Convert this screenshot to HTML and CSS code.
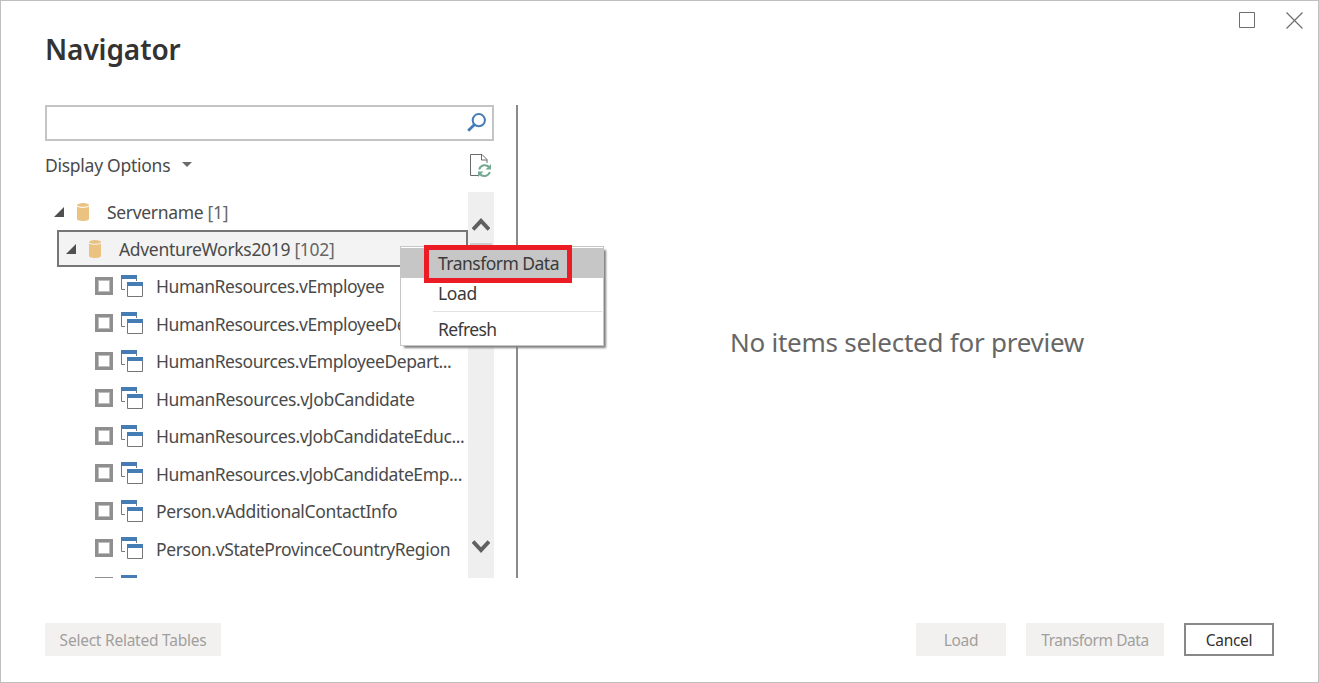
FILE: index.html
```html
<!DOCTYPE html>
<html lang="en">
<head>
<meta charset="utf-8">
<title>Navigator</title>
<link rel="stylesheet" href="styles.css">
</head>
<body>
<svg class="defs" width="0" height="0">
  <symbol id="views" viewBox="0 0 22 22">
    <path d="M.5 4v10.5H4M15.5 4v2" fill="none" stroke="#767676"/>
    <path d="M0 0h16v4H0z" fill="#457cb4"/>
    <path d="M6.500 10v11.500h15V10" fill="#fff" stroke="#767676"/>
    <path d="M6 7h16v4H6z" fill="#457cb4"/>
  </symbol>
  <symbol id="database" viewBox="0 0 12 18">
    <path d="M0 3.500C2 5.200 10 5.200 12 3.500V16c0 2.600-12 2.600-12 0z" fill="#eac282"/>
    <ellipse cx="6" cy="1.900" rx="6" ry="1.800" fill="#eac282"/>
  </symbol>
  <symbol id="expanded" viewBox="0 0 10 10"><path d="M10 0v10H0z" fill="#505050"/></symbol>
</svg>
<div class="dialog">
  <div class="window-controls">
    <svg width="16" height="16" viewBox="0 0 16 16"><path d="M.5.5h15v15H.5z" fill="none" stroke="#6e6e6e"/></svg>
    <svg width="17" height="17" viewBox="0 0 17 17"><path d="M.5.500l16 16M16.500.500l-16 16" fill="none" stroke="#6e6e6e" stroke-width="1.200"/></svg>
  </div>
  <h1 class="title"><span>Navigator</span></h1>
  <main class="content">
    <section class="sidebar">
      <div class="search">
        <svg width="20" height="20" viewBox="0 0 20 20"><circle cx="11.800" cy="7.200" r="6.100" fill="none" stroke="#457cb4" stroke-width="2"/><path d="M7.500 11.500L1.200 17.800" stroke="#457cb4" stroke-width="2.800"/></svg>
      </div>
      <div class="options">
        <span class="options-label">Display Options</span>
        <svg class="caret" width="10" height="5" viewBox="0 0 10 5"><path d="M0 0h10L5 5z" fill="#6a6a6a"/></svg>
        <svg class="refresh" width="22" height="24" viewBox="0 0 22 24">
          <path d="M8 21.500H.5V.5H12l5 5V9M11.500.5V6H17" fill="none" stroke="#6a6a6a"/>
          <path d="M9.200 15.500a5.800 5.800 0 0 1 10-2.300M19.800 18a5.800 5.800 0 0 1-10 2" fill="none" stroke="#75aa92" stroke-width="2"/>
          <path d="M21 10v5.500h-5.500zM8 23v-5.500h5.500z" fill="#75aa92"/>
        </svg>
      </div>
      <div class="tree-area">
        <div class="tree">
          <div class="node server"><svg class="arrow"><use href="#expanded"/></svg><svg class="db"><use href="#database"/></svg><span class="t-server">Servername <i>[1]</i></span></div>
          <div class="node selected"><svg class="arrow"><use href="#expanded"/></svg><svg class="db"><use href="#database"/></svg><span class="t-db">AdventureWorks2019 <i>[102]</i></span></div>
          <div class="node item"><b class="check"></b><svg class="views"><use href="#views"/></svg><span class="t1">HumanResources.vEmployee</span></div>
          <div class="node item"><b class="check"></b><svg class="views"><use href="#views"/></svg><span class="t2">HumanResources.vEmployeeDe</span></div>
          <div class="node item"><b class="check"></b><svg class="views"><use href="#views"/></svg><span class="t2">HumanResources.vEmployeeDepart...</span></div>
          <div class="node item"><b class="check"></b><svg class="views"><use href="#views"/></svg><span class="t3">HumanResources.vJobCandidate</span></div>
          <div class="node item"><b class="check"></b><svg class="views"><use href="#views"/></svg><span class="t4">HumanResources.vJobCandidateEduc...</span></div>
          <div class="node item"><b class="check"></b><svg class="views"><use href="#views"/></svg><span class="t5">HumanResources.vJobCandidateEmp...</span></div>
          <div class="node item"><b class="check"></b><svg class="views"><use href="#views"/></svg><span class="t6">Person.vAdditionalContactInfo</span></div>
          <div class="node item"><b class="check"></b><svg class="views"><use href="#views"/></svg><span class="t7">Person.vStateProvinceCountryRegion</span></div>
          <div class="node item"><b class="check"></b><svg class="views"><use href="#views"/></svg></div>
        </div>
        <div class="scrollbar">
          <svg width="18" height="14" viewBox="0 0 18 14"><path d="M1 12.500l8-8.500 8 8.500" fill="none" stroke="#606060" stroke-width="4"/></svg>
          <div class="thumb"></div>
          <svg width="18" height="14" viewBox="0 0 18 14"><path d="M1 1.500l8 8.500 8-8.500" fill="none" stroke="#606060" stroke-width="4"/></svg>
        </div>
      </div>
    </section>
    <section class="preview"><span>No items selected for preview</span></section>
  </main>
  <footer class="footer">
    <button class="btn related" disabled><span>Select Related Tables</span></button>
    <button class="btn load" disabled><span>Load</span></button>
    <button class="btn transform" disabled><span>Transform Data</span></button>
    <button class="btn cancel"><span>Cancel</span></button>
  </footer>
  <div class="menu">
    <div class="menu-item active"><span class="m1">Transform Data</span></div>
    <div class="menu-item"><span class="m2">Load</span></div>
    <div class="separator"></div>
    <div class="menu-item last"><span class="m3">Refresh</span></div>
  </div>
  <div class="highlight"></div>
</div>
</body>
</html>
```
FILE: styles.css
```css
* { box-sizing: border-box; }
body { margin: 0; font-family: "Noto Sans", "Open Sans", sans-serif; font-size: 17.5px; color: #4a4a4a; background: #fff; }
svg { display: block; flex: none; }
.defs { position: absolute; }
.dialog { position: relative; width: 1319px; height: 683px; border: 1px solid #bfbfbf; padding: 0 44px; display: flex; flex-direction: column; overflow: hidden; }
.window-controls { height: 29px; display: flex; justify-content: flex-end; gap: 31px; margin-right: -29px; padding-top: 11px; }
.title { margin: 0; height: 75px; font-size: 28px; line-height: 38px; font-weight: 600; letter-spacing: -.1px; color: #333; }
.content { display: flex; height: 473px; }
.sidebar { width: 473px; padding-right: 22px; border-right: 2px solid #8a8a8a; }
.search { height: 36px; border: 2px solid #c4c4c4; display: flex; align-items: center; justify-content: flex-end; padding-right: 5px; }
.options { height: 51px; display: flex; align-items: center; line-height: 24px; padding: 0 2px 2px 0; }
.options-label { width: 137px; letter-spacing: -.27px; margin-top: -2px; }
.caret { margin-top: -3px; }
.refresh { margin-left: auto; }
.tree-area { display: flex; height: 386px; overflow: hidden; }
.tree { width: 423px; overflow: hidden; padding-top: 1px; }
.node { height: 37.5px; display: flex; align-items: center; white-space: nowrap; }
.node span { line-height: 24px; }
.node i { font-style: normal; color: #666; }
.server { padding-left: 9px; height: 37px; }
.selected { margin-left: 12px; padding-left: 7px; height: 37px; border: 2px solid #767676; background: #f3f3f3; }
.arrow { width: 10px; height: 10px; margin-right: 13px; }
.db { width: 12px; height: 18px; margin-right: 18px; }
.item { padding-left: 50px; }
.item span { margin-top: 1px; }
.selected span { margin-top: 1px; }
.check { width: 18px; height: 18px; border: 3px solid #8f8f8f; box-shadow: inset 0 0 0 1px #bdbdbd; margin-right: 8px; flex: none; }
.views { width: 22px; height: 22px; margin-right: 13px; }
.t-server { letter-spacing: -.32px; }
.t-db { letter-spacing: -.32px; }
.t1 { letter-spacing: -.44px; }
.t2 { letter-spacing: -.43px; }
.t3 { letter-spacing: -.35px; }
.t4, .t5 { letter-spacing: -.39px; }
.t6 { letter-spacing: -.35px; }
.t7 { letter-spacing: -.36px; }
.scrollbar { width: 26px; background: #efefef; display: flex; flex-direction: column; align-items: center; padding: 25px 1px 24px 0; }
.thumb { width: 22px; height: 50px; background: #cdcdcd; margin: 12px 0 auto; }
.preview { flex: 1; display: flex; align-items: center; justify-content: center; padding-left: 22px; font-size: 26px; letter-spacing: -.25px; color: #666; }
.footer { display: flex; margin-top: 45px; }
.btn { height: 33px; border: 0; padding: 1px 0 0; background: #f2f1f0; color: #a19f9d; font-family: inherit; font-size: 15.5px; line-height: 22px; }
.related { width: 176px; margin-right: auto; letter-spacing: -.24px; }
.load { width: 90px; margin-right: 20px; letter-spacing: -.25px; }
.transform { width: 138px; margin-right: 20px; letter-spacing: -.43px; }
.cancel { width: 90px; border: 2px solid #8a8886; background: #fff; color: #323130; letter-spacing: -.3px; }
.menu { position: absolute; left: 399px; top: 245px; width: 204px; height: 100px; border: 1px solid #c6c6c6; background: #fff; box-shadow: 3px 3px 2px -1px #808080; padding-top: 1px; color: #3a3a3a; }
.menu-item { height: 30px; line-height: 30px; padding-left: 37px; }
.active { background: #c6c6c6; }
.last { line-height: 29px; }
.m1 { letter-spacing: -.52px; }
.m2 { letter-spacing: -.35px; }
.m3 { letter-spacing: -.6px; }
.separator { height: 1px; margin: 3px 1px 3px 32px; background: #e2e2e2; }
.highlight { position: absolute; left: 423px; top: 244px; width: 148px; height: 38px; border: 5px solid #ec1c24; }
```
